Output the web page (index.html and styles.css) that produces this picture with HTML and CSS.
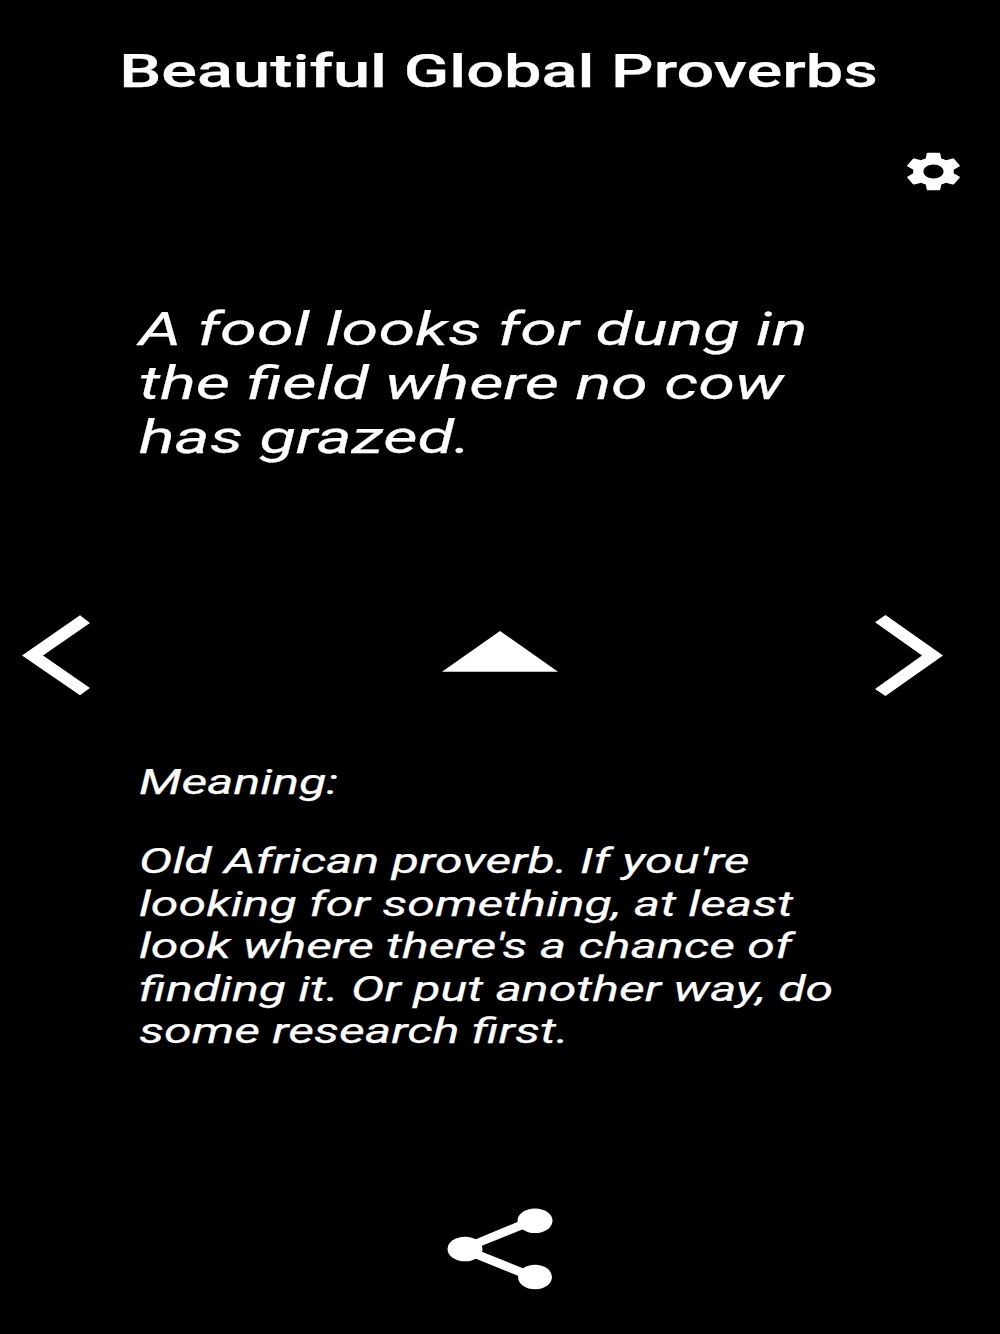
FILE: index.html
```html
<!DOCTYPE html>
<html lang="en">
<head>
<meta charset="utf-8">
<title>Beautiful Global Proverbs</title>
<link rel="stylesheet" href="styles.css">
</head>
<body>
<main class="screen">
  <header class="header"><h1 class="title">Beautiful Global Proverbs</h1></header>
  <div class="toolbar">
    <svg class="gear" viewBox="0 0 24 24" preserveAspectRatio="none" role="img" aria-label="Settings"><path d="M19.43 12.98c.04-.32.07-.64.07-.98s-.03-.66-.07-.98l2.11-1.65c.19-.15.24-.42.12-.64l-2-3.46c-.12-.22-.39-.3-.61-.22l-2.49 1c-.52-.4-1.08-.73-1.69-.98l-.38-2.65C14.46 2.18 14.25 2 14 2h-4c-.25 0-.46.18-.49.42l-.38 2.65c-.61.25-1.17.59-1.69.98l-2.49-1c-.23-.09-.49 0-.61.22l-2 3.46c-.13.22-.07.49.12.64l2.11 1.65c-.04.32-.07.65-.07.98s.03.66.07.98l-2.11 1.65c-.19.15-.24.42-.12.64l2 3.46c.12.22.39.3.61.22l2.49-1c.52.4 1.08.73 1.69.98l.38 2.65c.03.24.24.42.49.42h4c.25 0 .46-.18.49-.42l.38-2.65c.61-.25 1.17-.59 1.69-.98l2.49 1c.23.09.49 0 .61-.22l2-3.46c.12-.22.07-.49-.12-.64l-2.11-1.65zM12 15.7c-2.04 0-3.7-1.66-3.7-3.7s1.66-3.7 3.7-3.7 3.7 1.66 3.7 3.7-1.66 3.7-3.7 3.7z"/></svg>
  </div>
  <section class="proverb">
    <p class="wide">A fool looks for dung in<br>the field where no cow<br>has grazed.</p>
  </section>
  <nav class="controls">
    <svg class="chevron" viewBox="0 0 68 81" role="img" aria-label="Previous"><path d="M0 40.5 58 0.3 68 8 21 40.5 68 73 58 80.3Z"/></svg>
    <svg class="triangle" viewBox="0 0 116 41" role="img" aria-label="Hide meaning"><path d="M58 0 116 40.7H0Z"/></svg>
    <svg class="chevron" viewBox="0 0 68 81" role="img" aria-label="Next"><path d="M68 40.5 10.5 0 0 7.3 47 40.5 0 74 10.5 81Z"/></svg>
  </nav>
  <section class="meaning">
    <p class="wide label">Meaning:</p>
    <p class="wide">Old African proverb. If you're<br>looking for something, at least<br>look where there's a chance of<br>finding it. Or put another way, do<br>some research first.</p>
  </section>
  <footer class="footer">
    <svg class="share" viewBox="0 0 106 82" role="img" aria-label="Share">
      <path d="M27 32 74 12.5 79 20 33 38.5ZM27 50 33 43 79 61.5 74 69Z"/>
      <ellipse cx="18" cy="41" rx="17.5" ry="12.3"/>
      <ellipse cx="88" cy="12.7" rx="17.5" ry="12.3"/>
      <ellipse cx="88" cy="69" rx="17" ry="12.2"/>
    </svg>
  </footer>
</main>
</body>
</html>
```
FILE: styles.css
```css
* { box-sizing: border-box; }

body {
  margin: 0;
  background: #000;
  color: #fff;
  font-family: Roboto, "Liberation Sans", sans-serif;
  -webkit-text-stroke: 0.25px #fff;
}

.screen {
  display: flex;
  flex-direction: column;
  width: 1000px;
  height: 1334px;
  overflow: hidden;
}

h1, p { margin: 0; }

svg { display: block; fill: #fff; }

.header {
  display: flex;
  justify-content: center;
  height: 149px;
  padding: 43.5px 3px 0 0;
}

.title {
  font-size: 46.2px;
  font-weight: 500;
  line-height: 54px;
  white-space: nowrap;
  transform: scaleX(1.445);
}

.toolbar {
  display: flex;
  justify-content: flex-end;
  height: 153px;
  padding-right: 34px;
}

.gear { width: 65px; height: 45px; }

/* Text set in an expanded width */
.wide {
  width: max-content;
  white-space: nowrap;
  font-style: italic;
  transform: translateY(0.4px) scaleX(1.443);
  transform-origin: left;
}

.proverb {
  height: 313px;
  padding-left: 139px;
  font-size: 46.2px;
  line-height: 54px;
}

.controls {
  display: flex;
  justify-content: space-between;
  height: 146px;
  padding: 0 57px 0 22px;
}

.chevron { width: 68px; height: 81px; }

.triangle {
  width: 116px;
  height: 41px;
  margin: 16px 0 0 35px;
}

.meaning {
  height: 447px;
  padding-left: 139px;
  font-size: 34.7px;
  line-height: 42.5px;
}

.label { margin-bottom: 36.5px; }

.footer { display: flex; justify-content: center; }

.share { width: 106px; height: 82px; }
```
